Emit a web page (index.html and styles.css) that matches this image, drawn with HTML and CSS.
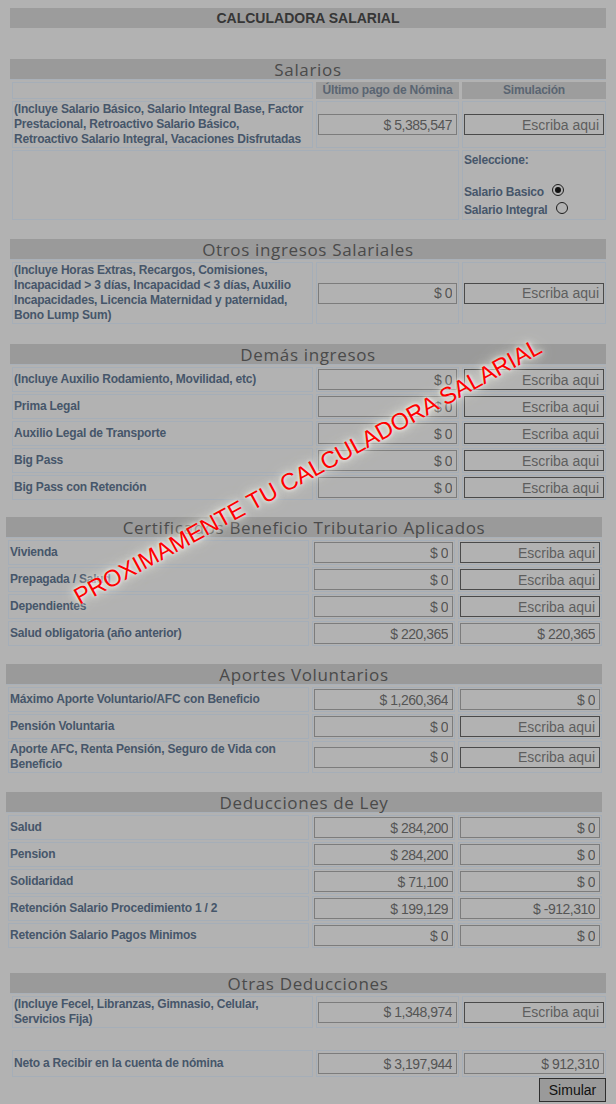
FILE: index.html
```html
<!DOCTYPE html>
<html lang="es">
<head>
<meta charset="utf-8">
<title>Calculadora Salarial</title>
<link rel="stylesheet" href="styles.css">
</head>
<body>
<div class="page">
  <div class="title">CALCULADORA SALARIAL</div>

  <section class="sec m31">
    <div class="bar">Salarios</div>
    <div class="grid">
      <div class="cell lbl sub"></div>
      <div class="colhead">Último pago de Nómina</div>
      <div class="colhead">Simulación</div>

      <div class="cell lbl"><span>(Incluye Salario Básico, Salario Integral Base, Factor Prestacional, Retroactivo Salario Básico,<br>Retroactivo Salario Integral, Vacaciones Disfrutadas</span></div>
      <div class="cell icell"><input class="inp" readonly value="$ 5,385,547"></div>
      <div class="cell icell"><input class="inp edit" placeholder="Escriba aqui"></div>

      <div class="cell span2"></div>
      <div class="cell choose">
        <div class="ch-line">Seleccione:</div>
        <div class="ch-blank"></div>
        <div class="ch-opt">Salario Basico<span class="radio on"></span></div>
        <div class="ch-opt last">Salario Integral<span class="radio"></span></div>
      </div>
    </div>
  </section>

  <section class="sec m19">
    <div class="bar">Otros ingresos Salariales</div>
    <div class="grid">
      <div class="cell lbl">(Incluye Horas Extras, Recargos, Comisiones, Incapacidad &gt; 3 días, Incapacidad &lt; 3 días, Auxilio Incapacidades, Licencia Maternidad y paternidad, Bono Lump Sum)</div>
      <div class="cell icell"><input class="inp" readonly value="$ 0"></div>
      <div class="cell icell"><input class="inp edit" placeholder="Escriba aqui"></div>
    </div>
  </section>

  <section class="sec m20">
    <div class="bar">Demás ingresos</div>
    <div class="grid">
      <div class="cell lbl">(Incluye Auxilio Rodamiento, Movilidad, etc)</div>
      <div class="cell icell"><input class="inp" readonly value="$ 0"></div>
      <div class="cell icell"><input class="inp edit" placeholder="Escriba aqui"></div>

      <div class="cell lbl">Prima Legal</div>
      <div class="cell icell"><input class="inp" readonly value="$ 0"></div>
      <div class="cell icell"><input class="inp edit" placeholder="Escriba aqui"></div>

      <div class="cell lbl">Auxilio Legal de Transporte</div>
      <div class="cell icell"><input class="inp" readonly value="$ 0"></div>
      <div class="cell icell"><input class="inp edit" placeholder="Escriba aqui"></div>

      <div class="cell lbl">Big Pass</div>
      <div class="cell icell"><input class="inp" readonly value="$ 0"></div>
      <div class="cell icell"><input class="inp edit" placeholder="Escriba aqui"></div>

      <div class="cell lbl">Big Pass con Retención</div>
      <div class="cell icell"><input class="inp" readonly value="$ 0"></div>
      <div class="cell icell"><input class="inp edit" placeholder="Escriba aqui"></div>
    </div>
  </section>

  <section class="sec shift m17">
    <div class="bar">Certificados Beneficio Tributario Aplicados</div>
    <div class="grid">
      <div class="cell lbl">Vivienda</div>
      <div class="cell icell"><input class="inp" readonly value="$ 0"></div>
      <div class="cell icell"><input class="inp edit" placeholder="Escriba aqui"></div>

      <div class="cell lbl">Prepagada / Salud</div>
      <div class="cell icell"><input class="inp" readonly value="$ 0"></div>
      <div class="cell icell"><input class="inp edit" placeholder="Escriba aqui"></div>

      <div class="cell lbl">Dependientes</div>
      <div class="cell icell"><input class="inp" readonly value="$ 0"></div>
      <div class="cell icell"><input class="inp edit" placeholder="Escriba aqui"></div>

      <div class="cell lbl">Salud obligatoria (año anterior)</div>
      <div class="cell icell"><input class="inp" readonly value="$ 220,365"></div>
      <div class="cell icell"><input class="inp" readonly value="$ 220,365"></div>
    </div>
  </section>

  <section class="sec shift m18">
    <div class="bar">Aportes Voluntarios</div>
    <div class="grid">
      <div class="cell lbl">Máximo Aporte Voluntario/AFC con Beneficio</div>
      <div class="cell icell"><input class="inp" readonly value="$ 1,260,364"></div>
      <div class="cell icell"><input class="inp" readonly value="$ 0"></div>

      <div class="cell lbl">Pensión Voluntaria</div>
      <div class="cell icell"><input class="inp" readonly value="$ 0"></div>
      <div class="cell icell"><input class="inp edit" placeholder="Escriba aqui"></div>

      <div class="cell lbl">Aporte AFC, Renta Pensión, Seguro de Vida con Beneficio</div>
      <div class="cell icell"><input class="inp" readonly value="$ 0"></div>
      <div class="cell icell"><input class="inp edit" placeholder="Escriba aqui"></div>
    </div>
  </section>

  <section class="sec shift m19">
    <div class="bar">Deducciones de Ley</div>
    <div class="grid">
      <div class="cell lbl">Salud</div>
      <div class="cell icell"><input class="inp" readonly value="$ 284,200"></div>
      <div class="cell icell"><input class="inp" readonly value="$ 0"></div>

      <div class="cell lbl">Pension</div>
      <div class="cell icell"><input class="inp" readonly value="$ 284,200"></div>
      <div class="cell icell"><input class="inp" readonly value="$ 0"></div>

      <div class="cell lbl">Solidaridad</div>
      <div class="cell icell"><input class="inp" readonly value="$ 71,100"></div>
      <div class="cell icell"><input class="inp" readonly value="$ 0"></div>

      <div class="cell lbl">Retención Salario Procedimiento 1 / 2</div>
      <div class="cell icell"><input class="inp" readonly value="$ 199,129"></div>
      <div class="cell icell"><input class="inp" readonly value="$ -912,310"></div>

      <div class="cell lbl">Retención Salario Pagos Minimos</div>
      <div class="cell icell"><input class="inp" readonly value="$ 0"></div>
      <div class="cell icell"><input class="inp" readonly value="$ 0"></div>
    </div>
  </section>

  <section class="sec m25">
    <div class="bar">Otras Deducciones</div>
    <div class="grid">
      <div class="cell lbl">(Incluye Fecel, Libranzas, Gimnasio, Celular, Servicios Fija)</div>
      <div class="cell icell"><input class="inp" readonly value="$ 1,348,974"></div>
      <div class="cell icell"><input class="inp edit" placeholder="Escriba aqui"></div>
    </div>
  </section>

  <section class="sec m20">
    <div class="grid neto">
      <div class="cell lbl">Neto a Recibir en la cuenta de nómina</div>
      <div class="cell icell"><input class="inp" readonly value="$ 3,197,944"></div>
      <div class="cell icell"><input class="inp" readonly value="$ 912,310"></div>
    </div>
    <div class="actions"><button class="btn" type="button">Simular</button></div>
  </section>
</div>

<div class="stamp">PROXIMAMENTE TU CALCULADORA SALARIAL</div>
</body>
</html>
```

FILE: styles.css
```css
* { box-sizing: border-box; }

html, body {
  margin: 0;
  padding: 0;
}

body {
  background: #b2b2b2;
  font-family: "Liberation Sans", Arial, sans-serif;
  width: 616px;
  height: 1104px;
  overflow: hidden;
  position: relative;
}

.page {
  padding: 8px 10px 0 10px;
}

.title {
  height: 20px;
  background: #9c9c9c;
  color: #363636;
  font-weight: bold;
  font-size: 14px;
  line-height: 20px;
  text-align: center;
}

.sec { width: 596px; }
.sec.shift { margin-left: -4px; }

.m17 { margin-top: 17px; }
.m18 { margin-top: 18px; }
.m19 { margin-top: 19px; }
.m20 { margin-top: 20px; }
.m25 { margin-top: 25px; }
.m31 { margin-top: 31px; }

.bar {
  height: 21px;
  background: #9a9a9a;
  border-bottom: 1px solid #a9b0b8;
  text-align: center;
  font-family: "Open Sans", "DejaVu Sans", sans-serif;
  font-size: 17px;
  letter-spacing: 0.65px;
  color: #4a4a4a;
  line-height: 21px;
}

.grid {
  display: grid;
  grid-template-columns: 301px 143px 144px;
  column-gap: 3px;
  row-gap: 2px;
  padding: 2px 0 0 2px;
}

.cell {
  border: 1px solid #a5aeb8;
  min-height: 25px;
  display: flex;
  align-items: center;
}

.lbl {
  font-size: 12px;
  font-weight: bold;
  letter-spacing: -0.2px;
  color: #46566a;
  line-height: 15px;
  padding-left: 1px;
}

.sub { min-height: 17px; height: 17px; }

.colhead {
  height: 17px;
  background: #9d9d9d;
  color: #5a6572;
  font-size: 12px;
  font-weight: bold;
  letter-spacing: -0.2px;
  line-height: 17px;
  text-align: center;
}

.icell { padding: 1px; }

.span2 { grid-column: span 2; }

.inp {
  display: block;
  width: 100%;
  height: 21px;
  margin: 0;
  border: 1px solid #7c7c7c;
  background: transparent;
  font: 14px "Liberation Sans", Arial, sans-serif;
  letter-spacing: -0.5px;
  color: #555;
  text-align: right;
  padding: 0 4px 0 3px;
  outline: none;
}

.inp.edit { border-color: #4a4a4a; }

.inp::placeholder {
  letter-spacing: 0;
  color: #5e5e5e;
  opacity: 1;
}

.choose {
  display: block;
  padding: 2px 0 0 1px;
  font-size: 12px;
  font-weight: bold;
  letter-spacing: -0.2px;
  color: #46566a;
  min-height: 70px;
}

.ch-line { line-height: 15px; height: 15px; }
.ch-blank { height: 14px; }

.ch-opt {
  height: 20px;
  display: flex;
  align-items: center;
}

.ch-opt.last { height: 16px; }

.radio {
  width: 12px;
  height: 12px;
  margin-left: 8px;
  border: 1px solid #1e1e1e;
  border-radius: 50%;
  position: relative;
  top: -2px;
}

.radio.on::after {
  content: "";
  position: absolute;
  left: 2px;
  top: 2px;
  width: 6px;
  height: 6px;
  border-radius: 50%;
  background: #111;
}

.neto .cell { min-height: 27px; }

.actions {
  display: flex;
  justify-content: flex-end;
  padding-top: 1px;
}

.btn {
  width: 67px;
  height: 24px;
  background: #9a9a9a;
  border: 1px solid #2e2e2e;
  font: 14px "Liberation Sans", Arial, sans-serif;
  color: #111;
  padding: 0;
}

.stamp {
  position: absolute;
  left: 308px;
  top: 472px;
  transform: translate(-50%, -50%) rotate(-28.6deg);
  color: #ff0000;
  font: 23.5px "Liberation Sans", Arial, sans-serif;
  white-space: nowrap;
  text-shadow: 0 0 4px #fff, 0 0 10px #fffef0, 0 0 18px rgba(255, 255, 225, 0.7);
}
```
